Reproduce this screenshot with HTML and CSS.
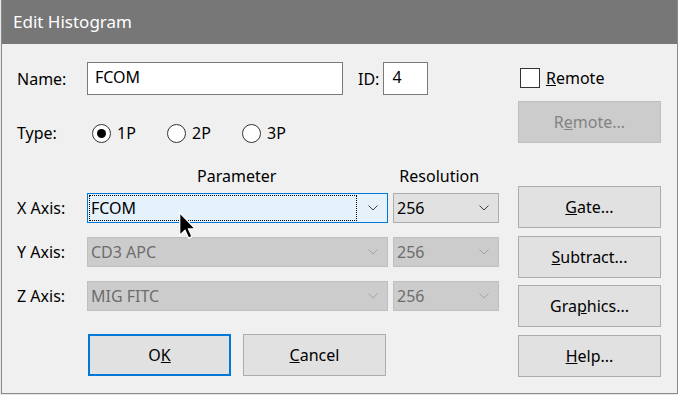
FILE: index.html
```html
<!DOCTYPE html>
<html>
<head>
	<title>Edit Histogram</title>
	<link rel="stylesheet" href="styles.css">
</head>
<body>
	<div class="dialog">
		<div class="titlebar">Edit Histogram</div>
		<div class="content">
			<div class="main">
				<div class="row name-row">
					<span class="label">Name:</span>
					<div class="textbox name-box">FCOM</div>
					<span class="id-label">ID:</span>
					<div class="textbox id-box">4</div>
				</div>
				<div class="row type-row">
					<span class="label">Type:</span>
					<div class="radios">
						<span class="radio-item"><span class="radio checked"></span>1P</span>
						<span class="radio-item"><span class="radio"></span>2P</span>
						<span class="radio-item"><span class="radio"></span>3P</span>
					</div>
				</div>
				<div class="head-row">
					<span class="col-head param-head">Parameter</span>
					<span class="col-head res-head">Resolution</span>
				</div>
				<div class="axis-grid">
					<span class="label">X Axis:</span>
					<div class="combo focused">
						<span class="combo-text"><span class="focus-rect">FCOM</span></span>
						<svg class="chevron" width="10" height="6" viewBox="0 0 10 6"><polyline points="0.5,0.5 5,5 9.5,0.5" /></svg>
					</div>
					<div class="combo res">
						<span class="combo-text">256</span>
						<svg class="chevron" width="10" height="6" viewBox="0 0 10 6"><polyline points="0.5,0.5 5,5 9.5,0.5" /></svg>
					</div>

					<span class="label">Y Axis:</span>
					<div class="combo disabled">
						<span class="combo-text">CD3 APC</span>
						<svg class="chevron" width="10" height="6" viewBox="0 0 10 6"><polyline points="0.5,0.5 5,5 9.5,0.5" /></svg>
					</div>
					<div class="combo res disabled">
						<span class="combo-text">256</span>
						<svg class="chevron" width="10" height="6" viewBox="0 0 10 6"><polyline points="0.5,0.5 5,5 9.5,0.5" /></svg>
					</div>

					<span class="label">Z Axis:</span>
					<div class="combo disabled">
						<span class="combo-text">MIG FITC</span>
						<svg class="chevron" width="10" height="6" viewBox="0 0 10 6"><polyline points="0.5,0.5 5,5 9.5,0.5" /></svg>
					</div>
					<div class="combo res disabled">
						<span class="combo-text">256</span>
						<svg class="chevron" width="10" height="6" viewBox="0 0 10 6"><polyline points="0.5,0.5 5,5 9.5,0.5" /></svg>
					</div>
				</div>
				<div class="actions">
					<div class="button default">O<u>K</u></div>
					<div class="button"><u>C</u>ancel</div>
				</div>
			</div>
			<div class="side">
				<div class="check-row"><span class="checkbox"></span><u>R</u>emote</div>
				<div class="button disabled remote-btn">R<u>e</u>mote...</div>
				<div class="side-buttons">
					<div class="button"><u>G</u>ate...</div>
					<div class="button"><u>S</u>ubtract...</div>
					<div class="button">Gra<u>p</u>hics...</div>
					<div class="button"><u>H</u>elp...</div>
				</div>
			</div>
		</div>
	</div>
	<svg class="cursor" width="18" height="27" viewBox="0 0 12 18">
		<path d="M0.5,0.5 L0.5,15.5 L4,12.2 L6.4,17.4 L8.6,16.4 L6.3,11.3 L10.8,11.3 Z" />
	</svg>
</body>
</html>
```

FILE: styles.css
```css
html, body {
	margin: 0;
	padding: 0;
	background-color: #e8e8e8;
}
body {
	width: 678px;
	height: 395px;
	position: relative;
	font-family: "Noto Sans", "Open Sans", sans-serif;
	font-size: 16px;
	color: #000;
}
.dialog {
	margin-left: 1px;
	width: 675px;
	height: 393px;
	border: 1px solid #8a8a8a;
	border-top: none;
	background-color: #f0f0f0;
	display: flex;
	flex-direction: column;
}
.titlebar {
	height: 44px;
	flex: none;
	background-color: #777777;
	color: #ffffff;
	font-size: 17px;
	padding-left: 11px;
	line-height: 43px;
}
.content {
	display: flex;
	flex: 1;
}
.main {
	width: 480px;
	padding-left: 15px;
	padding-top: 18px;
}
.row {
	display: flex;
	align-items: center;
}
.label {
	width: 70px;
	flex: none;
}
.textbox {
	box-sizing: border-box;
	height: 33px;
	border: 1px solid #7a7a7a;
	background-color: #fff;
	padding: 3px 7px;
	line-height: 22px;
}
.name-box {
	width: 256px;
}
.id-label {
	margin-left: 15px;
	margin-right: 4px;
}
.id-box {
	width: 45px;
	padding-left: 8px;
}
.type-row {
	margin-top: 28px;
	height: 20px;
}
.radios {
	display: flex;
	padding-left: 5px;
}
.radio-item {
	display: flex;
	align-items: center;
	width: 75px;
}
.radio {
	box-sizing: border-box;
	width: 19px;
	height: 19px;
	border: 1px solid #333;
	border-radius: 50%;
	background-color: #fff;
	margin-right: 6px;
	display: flex;
	align-items: center;
	justify-content: center;
}
.radio.checked::after {
	content: "";
	width: 9px;
	height: 9px;
	border-radius: 50%;
	background-color: #000;
}
.head-row {
	display: flex;
	margin-top: 22px;
	padding-left: 70px;
	height: 22px;
	line-height: 22px;
}
.col-head {
	text-align: center;
}
.param-head {
	width: 301px;
}
.res-head {
	width: 111px;
	padding-left: 5px;
	box-sizing: border-box;
	padding-right: 10px;
}
.axis-grid {
	margin-top: 6px;
	display: grid;
	grid-template-columns: 70px 301px 111px;
	row-gap: 14px;
	align-items: center;
}
.combo {
	box-sizing: border-box;
	height: 30px;
	border: 1px solid #adadad;
	background-color: #e1e1e1;
	display: flex;
	align-items: center;
	padding: 0 9px 0 3px;
}
.combo.res {
	margin-left: 5px;
}
.combo-text {
	flex: 1;
	line-height: 22px;
}
.focus-rect {
	display: block;
	margin-right: 12px;
	outline: 1px dotted #000;
	outline-offset: 0;
	padding-left: 1px;
	height: 24px;
	line-height: 24px;
}
.combo.focused {
	border-color: #0078d7;
	background-color: #e5f1fb;
	padding-left: 2px;
}
.chevron polyline {
	fill: none;
	stroke: #404040;
	stroke-width: 1;
}
.combo.disabled {
	background-color: #cccccc;
	border-color: #bfbfbf;
	color: #6d6d6d;
}
.combo.disabled .chevron polyline {
	stroke: #a3a3a3;
}
.actions {
	display: flex;
	margin-top: 23px;
	padding-left: 71px;
	gap: 12px;
}
.button {
	box-sizing: border-box;
	width: 143px;
	height: 42px;
	border: 1px solid #adadad;
	background-color: #e1e1e1;
	display: flex;
	align-items: center;
	justify-content: center;
}
.button.default {
	border: 2px solid #0078d7;
}
.button.disabled {
	background-color: #cccccc;
	border-color: #bfbfbf;
	color: #838383;
}
.side {
	margin-left: 21px;
	padding-top: 24px;
	width: 143px;
}
.check-row {
	display: flex;
	align-items: center;
	height: 20px;
	padding-left: 2px;
}
.checkbox {
	box-sizing: border-box;
	width: 20px;
	height: 20px;
	border: 1px solid #333;
	background-color: #fff;
	margin-right: 6px;
}
.remote-btn {
	margin-top: 13px;
}
.side-buttons {
	margin-top: 43px;
	display: flex;
	flex-direction: column;
	gap: 7.67px;
}
.cursor {
	position: absolute;
	left: 179px;
	top: 212px;
}
.cursor path {
	fill: #000;
	stroke: #fff;
	stroke-width: 0.8;
	stroke-linejoin: miter;
}
```
